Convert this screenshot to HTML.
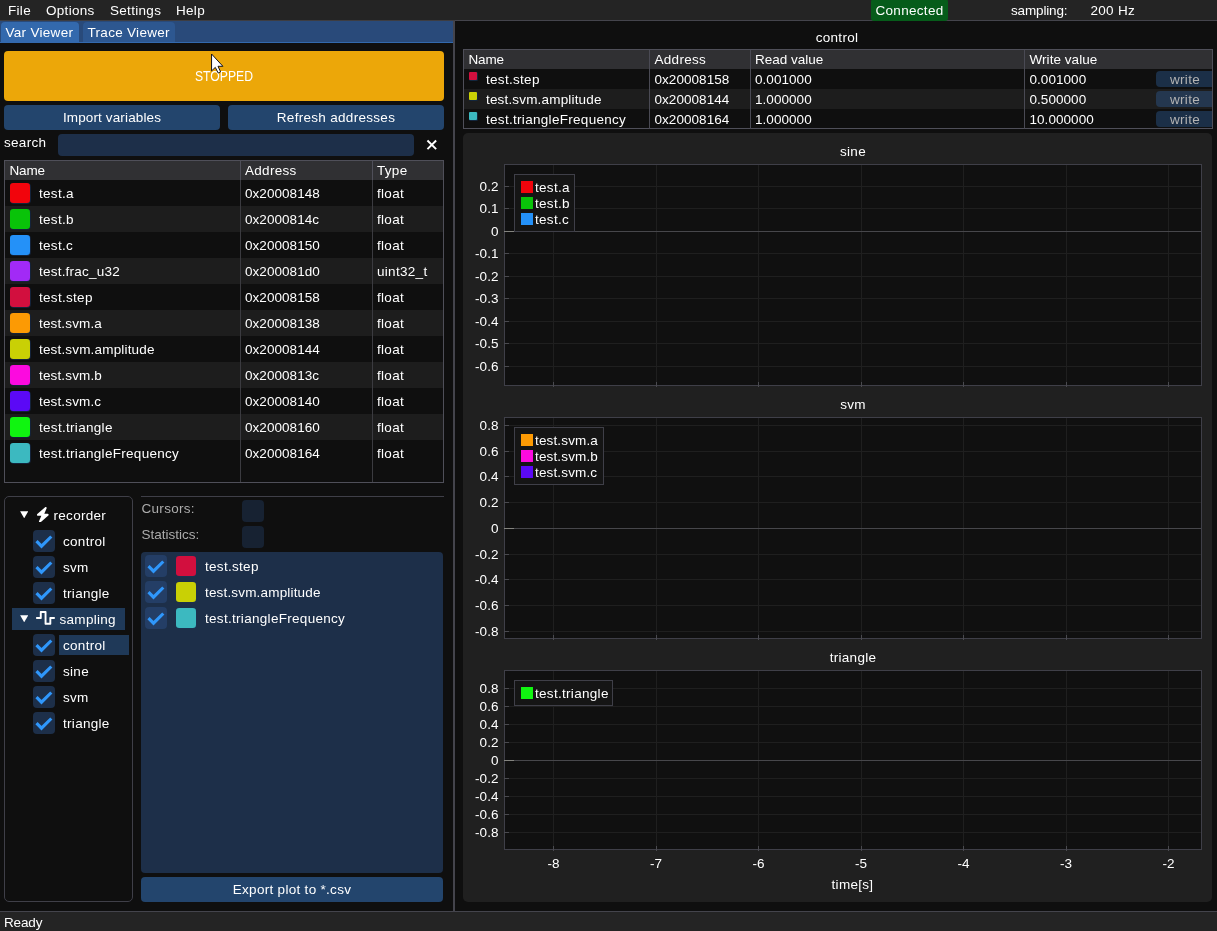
<!DOCTYPE html>
<html><head><meta charset="utf-8"><title>MCUViewer</title>
<style>
html,body{margin:0;padding:0;}
body{width:1217px;height:931px;overflow:hidden;position:relative;background:#0f0f0f;
 font-family:"Liberation Sans",sans-serif;font-size:13.5px;letter-spacing:0.3px;line-height:16px;color:#fff;}
#app{position:absolute;left:0;top:0;width:1217px;height:931px;overflow:hidden;will-change:transform;}
#app>div,#app>span,#app>svg{position:absolute;display:block;}
#app>span{white-space:pre;height:16px;}
#app>span.n{letter-spacing:0.05px;}
</style></head><body><div id="app">
<div style="left:0px;top:0px;width:1217px;height:20px;background:#242424;"></div>
<div style="left:0px;top:20px;width:455px;height:1px;background:#3d3d42;"></div>
<span style="left:8px;top:3px;">File</span>
<span style="left:46px;top:3px;">Options</span>
<span style="left:110px;top:3px;">Settings</span>
<span style="left:176px;top:3px;">Help</span>
<span style="left:1011px;top:3px;letter-spacing:-0.15px;">sampling:</span>
<span style="left:1090.5px;top:3px;">200 Hz</span>
<div style="left:0px;top:21px;width:453px;height:21px;background:#294a7a;"></div>
<div style="left:0px;top:42px;width:453px;height:1px;background:#3369ad;"></div>
<div style="left:1px;top:22px;width:78px;height:20px;background:#3369ad;border-radius:4px 4px 0 0;"></div>
<div style="left:83px;top:22px;width:92px;height:20px;background:#2d5790;border-radius:4px 4px 0 0;"></div>
<span style="left:5.5px;top:25px;">Var Viewer</span>
<span style="left:87.5px;top:25px;">Trace Viewer</span>
<div style="left:453px;top:21px;width:2px;height:890px;background:#44444c;"></div>
<div style="left:455px;top:20px;width:762px;height:1px;background:#44444c;"></div>
<div style="left:871px;top:-1px;width:77px;height:22px;background:#065c1a;border-radius:3px;"></div>
<span style="left:875.5px;top:3px;">Connected</span>
<div style="left:4px;top:51px;width:440px;height:50px;background:#eca709;border-radius:4px;"></div>
<span style="left:73.9px;width:300px;text-align:center;top:68px;font-size:14.6px;letter-spacing:0;transform:scaleX(0.835);">STOPPED</span>
<div style="left:4px;top:105px;width:216px;height:25px;background:#23456d;border-radius:4px;"></div>
<div style="left:228px;top:105px;width:216px;height:25px;background:#23456d;border-radius:4px;"></div>
<span style="left:-38px;width:300px;text-align:center;top:110px;letter-spacing:0.13px;">Import variables</span>
<span style="left:186px;width:300px;text-align:center;top:110px;">Refresh addresses</span>
<span style="left:4px;top:135px;">search</span>
<div style="left:58px;top:134px;width:356px;height:21.5px;background:#1d2f49;border-radius:4px;"></div>
<svg style="left:426.1px;top:138.8px" width="11.6" height="11.6" viewBox="0 0 12 12"><path d="M1.5 1.5 L10.5 10.5 M10.5 1.5 L1.5 10.5" stroke="#fff" stroke-width="2" fill="none"/></svg>
<div style="left:4px;top:160px;width:440px;height:323px;background:#4f4f59;"></div>
<div style="left:5px;top:161px;width:438px;height:321px;background:#0f0f0f;"></div>
<div style="left:5px;top:161px;width:438px;height:19px;background:#303033;"></div>
<div style="left:9.5px;top:182.5px;width:21px;height:21px;background:#14233a;border-radius:4px;"></div>
<div style="left:10px;top:183px;width:20px;height:20px;background:#f2040c;border-radius:3.2px;"></div>
<span style="left:39px;top:186px;">test.a</span>
<span class="n" style="left:245px;top:186px;">0x20008148</span>
<span style="left:377px;top:186px;">float</span>
<div style="left:5px;top:206px;width:438px;height:26px;background:#1d1d1d;"></div>
<div style="left:9.5px;top:208.5px;width:21px;height:21px;background:#14233a;border-radius:4px;"></div>
<div style="left:10px;top:209px;width:20px;height:20px;background:#09c309;border-radius:3.2px;"></div>
<span style="left:39px;top:212px;">test.b</span>
<span class="n" style="left:245px;top:212px;">0x2000814c</span>
<span style="left:377px;top:212px;">float</span>
<div style="left:9.5px;top:234.5px;width:21px;height:21px;background:#14233a;border-radius:4px;"></div>
<div style="left:10px;top:235px;width:20px;height:20px;background:#2491f8;border-radius:3.2px;"></div>
<span style="left:39px;top:238px;">test.c</span>
<span class="n" style="left:245px;top:238px;">0x20008150</span>
<span style="left:377px;top:238px;">float</span>
<div style="left:5px;top:258px;width:438px;height:26px;background:#1d1d1d;"></div>
<div style="left:9.5px;top:260.5px;width:21px;height:21px;background:#14233a;border-radius:4px;"></div>
<div style="left:10px;top:261px;width:20px;height:20px;background:#a22af6;border-radius:3.2px;"></div>
<span style="left:39px;top:264px;letter-spacing:0.22px;">test.frac_u32</span>
<span class="n" style="left:245px;top:264px;">0x200081d0</span>
<span style="left:377px;top:264px;">uint32_t</span>
<div style="left:9.5px;top:286.5px;width:21px;height:21px;background:#14233a;border-radius:4px;"></div>
<div style="left:10px;top:287px;width:20px;height:20px;background:#d20f3e;border-radius:3.2px;"></div>
<span style="left:39px;top:290px;">test.step</span>
<span class="n" style="left:245px;top:290px;">0x20008158</span>
<span style="left:377px;top:290px;">float</span>
<div style="left:5px;top:310px;width:438px;height:26px;background:#1d1d1d;"></div>
<div style="left:9.5px;top:312.5px;width:21px;height:21px;background:#14233a;border-radius:4px;"></div>
<div style="left:10px;top:313px;width:20px;height:20px;background:#fc9a04;border-radius:3.2px;"></div>
<span style="left:39px;top:316px;letter-spacing:0.15px;">test.svm.a</span>
<span class="n" style="left:245px;top:316px;">0x20008138</span>
<span style="left:377px;top:316px;">float</span>
<div style="left:9.5px;top:338.5px;width:21px;height:21px;background:#14233a;border-radius:4px;"></div>
<div style="left:10px;top:339px;width:20px;height:20px;background:#c9d005;border-radius:3.2px;"></div>
<span style="left:39px;top:342px;letter-spacing:0.17px;">test.svm.amplitude</span>
<span class="n" style="left:245px;top:342px;">0x20008144</span>
<span style="left:377px;top:342px;">float</span>
<div style="left:5px;top:362px;width:438px;height:26px;background:#1d1d1d;"></div>
<div style="left:9.5px;top:364.5px;width:21px;height:21px;background:#14233a;border-radius:4px;"></div>
<div style="left:10px;top:365px;width:20px;height:20px;background:#fc0adf;border-radius:3.2px;"></div>
<span style="left:39px;top:368px;letter-spacing:0.15px;">test.svm.b</span>
<span class="n" style="left:245px;top:368px;">0x2000813c</span>
<span style="left:377px;top:368px;">float</span>
<div style="left:9.5px;top:390.5px;width:21px;height:21px;background:#14233a;border-radius:4px;"></div>
<div style="left:10px;top:391px;width:20px;height:20px;background:#5b09f6;border-radius:3.2px;"></div>
<span style="left:39px;top:394px;letter-spacing:0.15px;">test.svm.c</span>
<span class="n" style="left:245px;top:394px;">0x20008140</span>
<span style="left:377px;top:394px;">float</span>
<div style="left:5px;top:414px;width:438px;height:26px;background:#1d1d1d;"></div>
<div style="left:9.5px;top:416.5px;width:21px;height:21px;background:#14233a;border-radius:4px;"></div>
<div style="left:10px;top:417px;width:20px;height:20px;background:#10f510;border-radius:3.2px;"></div>
<span style="left:39px;top:420px;">test.triangle</span>
<span class="n" style="left:245px;top:420px;">0x20008160</span>
<span style="left:377px;top:420px;">float</span>
<div style="left:9.5px;top:442.5px;width:21px;height:21px;background:#14233a;border-radius:4px;"></div>
<div style="left:10px;top:443px;width:20px;height:20px;background:#3cb9c0;border-radius:3.2px;"></div>
<span style="left:39px;top:446px;">test.triangleFrequency</span>
<span class="n" style="left:245px;top:446px;">0x20008164</span>
<span style="left:377px;top:446px;">float</span>
<span style="left:9.5px;top:163px;letter-spacing:-0.18px;">Name</span>
<span style="left:245px;top:163px;">Address</span>
<span style="left:377px;top:163px;">Type</span>
<div style="left:240px;top:161px;width:1px;height:321px;background:#3b3b40;"></div>
<div style="left:372px;top:161px;width:1px;height:321px;background:#3b3b40;"></div>
<div style="left:240px;top:161px;width:1px;height:19px;background:#4f4f59;"></div>
<div style="left:372px;top:161px;width:1px;height:19px;background:#4f4f59;"></div>
<div style="left:4px;top:496px;width:129px;height:406px;box-sizing:border-box;border:1px solid #3f3f48;border-radius:5px;"></div>
<svg style="left:19.8px;top:510.8px" width="8.4" height="7.4" viewBox="0 0 8.4 7.4"><path d="M0.1 0.2 L8.3 0.2 L4.2 7.3 Z" fill="#fff"/></svg>
<svg style="left:36.05px;top:506.6px" width="13.65" height="15.6" viewBox="0 0 448 512"><path d="M349.4 44.6c5.900-13.700 1.500-29.700-10.600-38.500s-28.600-8-39.900 1.800l-256 224c-10 8.800-13.600 22.900-8.900 35.300S50.700 288 64 288H175.500L98.600 467.400c-5.900 13.700-1.500 29.700 10.600 38.500s28.600 8 39.900-1.800l256-224c10-8.800 13.600-22.900 8.900-35.300s-16.600-20.700-30-20.700H272.500L349.400 44.600z" fill="#fff"/></svg>
<span style="left:53.5px;top:508px;">recorder</span>
<div style="left:33px;top:530px;width:22px;height:22px;background:#1d2f49;border-radius:4px;"></div>
<svg style="left:33px;top:530px" width="22" height="22" viewBox="0 0 22 22"><path d="M3.5 11.1 L8.5 16.2 L18.3 6.5" fill="none" stroke="#2f97fb" stroke-width="3.1"/></svg>
<span style="left:63px;top:534px;">control</span>
<div style="left:33px;top:556px;width:22px;height:22px;background:#1d2f49;border-radius:4px;"></div>
<svg style="left:33px;top:556px" width="22" height="22" viewBox="0 0 22 22"><path d="M3.5 11.1 L8.5 16.2 L18.3 6.5" fill="none" stroke="#2f97fb" stroke-width="3.1"/></svg>
<span style="left:63px;top:560px;">svm</span>
<div style="left:33px;top:582px;width:22px;height:22px;background:#1d2f49;border-radius:4px;"></div>
<svg style="left:33px;top:582px" width="22" height="22" viewBox="0 0 22 22"><path d="M3.5 11.1 L8.5 16.2 L18.3 6.5" fill="none" stroke="#2f97fb" stroke-width="3.1"/></svg>
<span style="left:63px;top:586px;">triangle</span>
<div style="left:12px;top:608px;width:113px;height:22px;background:#1f3958;"></div>
<svg style="left:19.8px;top:614.8px" width="8.4" height="7.4" viewBox="0 0 8.4 7.4"><path d="M0.1 0.2 L8.3 0.2 L4.2 7.3 Z" fill="#fff"/></svg>
<svg style="left:35.95px;top:610.3px" width="19.1" height="15.85" viewBox="0 0 640 512" preserveAspectRatio="none"><path d="M128 64c0-17.700 14.300-32 32-32H320c17.700 0 32 14.300 32 32V416h96V256c0-17.700 14.300-32 32-32H608c17.700 0 32 14.300 32 32s-14.300 32-32 32H512V448c0 17.700-14.300 32-32 32H320c-17.700 0-32-14.300-32-32V96H192V256c0 17.700-14.300 32-32 32H32c-17.700 0-32-14.300-32-32s14.300-32 32-32h96V64z" fill="#fff"/></svg>
<span style="left:59.5px;top:612px;">sampling</span>
<div style="left:59px;top:635px;width:70px;height:20px;background:#1f3958;"></div>
<div style="left:33px;top:634px;width:22px;height:22px;background:#1d2f49;border-radius:4px;"></div>
<svg style="left:33px;top:634px" width="22" height="22" viewBox="0 0 22 22"><path d="M3.5 11.1 L8.5 16.2 L18.3 6.5" fill="none" stroke="#2f97fb" stroke-width="3.1"/></svg>
<span style="left:63px;top:638px;">control</span>
<div style="left:33px;top:660px;width:22px;height:22px;background:#1d2f49;border-radius:4px;"></div>
<svg style="left:33px;top:660px" width="22" height="22" viewBox="0 0 22 22"><path d="M3.5 11.1 L8.5 16.2 L18.3 6.5" fill="none" stroke="#2f97fb" stroke-width="3.1"/></svg>
<span style="left:63px;top:664px;">sine</span>
<div style="left:33px;top:686px;width:22px;height:22px;background:#1d2f49;border-radius:4px;"></div>
<svg style="left:33px;top:686px" width="22" height="22" viewBox="0 0 22 22"><path d="M3.5 11.1 L8.5 16.2 L18.3 6.5" fill="none" stroke="#2f97fb" stroke-width="3.1"/></svg>
<span style="left:63px;top:690px;">svm</span>
<div style="left:33px;top:712px;width:22px;height:22px;background:#1d2f49;border-radius:4px;"></div>
<svg style="left:33px;top:712px" width="22" height="22" viewBox="0 0 22 22"><path d="M3.5 11.1 L8.5 16.2 L18.3 6.5" fill="none" stroke="#2f97fb" stroke-width="3.1"/></svg>
<span style="left:63px;top:716px;">triangle</span>
<div style="left:141px;top:496px;width:303px;height:1px;background:#3f3f48;"></div>
<span style="left:141.5px;top:501px;color:#acacac;">Cursors:</span>
<span style="left:141.5px;top:527px;color:#acacac;letter-spacing:0px;">Statistics:</span>
<div style="left:242px;top:500px;width:22px;height:22px;background:#172232;border-radius:4px;"></div>
<div style="left:242px;top:526px;width:22px;height:22px;background:#172232;border-radius:4px;"></div>
<div style="left:141px;top:552px;width:302px;height:321px;background:#1d2f49;border-radius:4px;"></div>
<div style="left:145px;top:555px;width:22px;height:22px;background:#243e66;border-radius:4px;"></div>
<svg style="left:145px;top:555px" width="22" height="22" viewBox="0 0 22 22"><path d="M3.5 11.1 L8.5 16.2 L18.3 6.5" fill="none" stroke="#2f97fb" stroke-width="3.1"/></svg>
<div style="left:175.5px;top:555.5px;width:21px;height:21px;background:#1c3150;border-radius:4px;"></div>
<div style="left:176px;top:556px;width:20px;height:20px;background:#d20f3e;border-radius:3.2px;"></div>
<span style="left:205px;top:559px;">test.step</span>
<div style="left:145px;top:581px;width:22px;height:22px;background:#243e66;border-radius:4px;"></div>
<svg style="left:145px;top:581px" width="22" height="22" viewBox="0 0 22 22"><path d="M3.5 11.1 L8.5 16.2 L18.3 6.5" fill="none" stroke="#2f97fb" stroke-width="3.1"/></svg>
<div style="left:175.5px;top:581.5px;width:21px;height:21px;background:#1c3150;border-radius:4px;"></div>
<div style="left:176px;top:582px;width:20px;height:20px;background:#c9d005;border-radius:3.2px;"></div>
<span style="left:205px;top:585px;letter-spacing:0.17px;">test.svm.amplitude</span>
<div style="left:145px;top:607px;width:22px;height:22px;background:#243e66;border-radius:4px;"></div>
<svg style="left:145px;top:607px" width="22" height="22" viewBox="0 0 22 22"><path d="M3.5 11.1 L8.5 16.2 L18.3 6.5" fill="none" stroke="#2f97fb" stroke-width="3.1"/></svg>
<div style="left:175.5px;top:607.5px;width:21px;height:21px;background:#1c3150;border-radius:4px;"></div>
<div style="left:176px;top:608px;width:20px;height:20px;background:#3cb9c0;border-radius:3.2px;"></div>
<span style="left:205px;top:611px;">test.triangleFrequency</span>
<div style="left:141px;top:877px;width:302px;height:25px;background:#23456d;border-radius:4px;"></div>
<span style="left:142px;width:300px;text-align:center;top:882px;">Export plot to *.csv</span>
<div style="left:0px;top:911px;width:1217px;height:1px;background:#44444c;"></div>
<div style="left:0px;top:912px;width:1217px;height:19px;background:#242424;"></div>
<span style="left:4px;top:915px;letter-spacing:-0.15px;">Ready</span>
<span style="left:687px;width:300px;text-align:center;top:30px;">control</span>
<div style="left:463px;top:49px;width:750px;height:80px;background:#4f4f59;"></div>
<div style="left:464px;top:50px;width:748px;height:78px;background:#0f0f0f;"></div>
<div style="left:464px;top:50px;width:748px;height:19px;background:#303033;"></div>
<div style="left:468.55px;top:71.55px;width:9.1px;height:9.1px;background:#12263d;border-radius:1.6px;"></div>
<div style="left:469px;top:72px;width:8.25px;height:8.25px;background:#d20f3e;border-radius:1px;"></div>
<span style="left:486px;top:72px;">test.step</span>
<span class="n" style="left:654.5px;top:72px;">0x20008158</span>
<span class="n" style="left:755px;top:72px;">0.001000</span>
<span class="n" style="left:1029.5px;top:72px;">0.001000</span>
<div style="left:1156px;top:71px;width:56px;height:16px;background:#1b2f47;border-radius:4px 0 0 4px;"></div>
<span style="left:1170px;top:72px;color:#b2b2b2;">write</span>
<div style="left:464px;top:89px;width:748px;height:20px;background:#1d1d1d;"></div>
<div style="left:468.55px;top:91.55px;width:9.1px;height:9.1px;background:#12263d;border-radius:1.6px;"></div>
<div style="left:469px;top:92px;width:8.25px;height:8.25px;background:#c9d005;border-radius:1px;"></div>
<span style="left:486px;top:92px;letter-spacing:0.17px;">test.svm.amplitude</span>
<span class="n" style="left:654.5px;top:92px;">0x20008144</span>
<span class="n" style="left:755px;top:92px;">1.000000</span>
<span class="n" style="left:1029.5px;top:92px;">0.500000</span>
<div style="left:1156px;top:91px;width:56px;height:16px;background:#24374f;border-radius:4px 0 0 4px;"></div>
<span style="left:1170px;top:92px;color:#b2b2b2;">write</span>
<div style="left:468.55px;top:111.55px;width:9.1px;height:9.1px;background:#12263d;border-radius:1.6px;"></div>
<div style="left:469px;top:112px;width:8.25px;height:8.25px;background:#3cb9c0;border-radius:1px;"></div>
<span style="left:486px;top:112px;">test.triangleFrequency</span>
<span class="n" style="left:654.5px;top:112px;">0x20008164</span>
<span class="n" style="left:755px;top:112px;">1.000000</span>
<span class="n" style="left:1029.5px;top:112px;">10.000000</span>
<div style="left:1156px;top:111px;width:56px;height:16px;background:#1b2f47;border-radius:4px 0 0 4px;"></div>
<span style="left:1170px;top:112px;color:#b2b2b2;">write</span>
<span style="left:468.5px;top:52px;letter-spacing:-0.18px;">Name</span>
<span style="left:654.5px;top:52px;">Address</span>
<span style="left:755px;top:52px;letter-spacing:0px;">Read value</span>
<span style="left:1029.5px;top:52px;letter-spacing:0.05px;">Write value</span>
<div style="left:649px;top:50px;width:1px;height:79px;background:#4a4a54;"></div>
<div style="left:750px;top:50px;width:1px;height:79px;background:#4a4a54;"></div>
<div style="left:1024px;top:50px;width:1px;height:79px;background:#4a4a54;"></div>
<div style="left:463px;top:133px;width:749px;height:769px;background:#202020;border-radius:5px;"></div>
<span style="left:703px;width:300px;text-align:center;top:144px;">sine</span>
<div style="left:504px;top:164px;width:698px;height:222px;background:#3f3f48;"></div>
<div style="left:505px;top:165px;width:696px;height:220px;background:#101010;"></div>
<div style="left:553px;top:165px;width:1px;height:220px;background:#1f1f1f;"></div>
<div style="left:553px;top:382px;width:1px;height:5px;background:#4a4a4f;"></div>
<div style="left:656px;top:165px;width:1px;height:220px;background:#1f1f1f;"></div>
<div style="left:656px;top:382px;width:1px;height:5px;background:#4a4a4f;"></div>
<div style="left:758px;top:165px;width:1px;height:220px;background:#1f1f1f;"></div>
<div style="left:758px;top:382px;width:1px;height:5px;background:#4a4a4f;"></div>
<div style="left:861px;top:165px;width:1px;height:220px;background:#1f1f1f;"></div>
<div style="left:861px;top:382px;width:1px;height:5px;background:#4a4a4f;"></div>
<div style="left:963px;top:165px;width:1px;height:220px;background:#1f1f1f;"></div>
<div style="left:963px;top:382px;width:1px;height:5px;background:#4a4a4f;"></div>
<div style="left:1066px;top:165px;width:1px;height:220px;background:#1f1f1f;"></div>
<div style="left:1066px;top:382px;width:1px;height:5px;background:#4a4a4f;"></div>
<div style="left:1168px;top:165px;width:1px;height:220px;background:#1f1f1f;"></div>
<div style="left:1168px;top:382px;width:1px;height:5px;background:#4a4a4f;"></div>
<div style="left:505px;top:186px;width:696px;height:1px;background:#1f1f1f;"></div>
<div style="left:504px;top:186px;width:5px;height:1px;background:#4a4a4f;"></div>
<span class="n" style="right:718.5px;top:179px;">0.2</span>
<div style="left:505px;top:208px;width:696px;height:1px;background:#1f1f1f;"></div>
<div style="left:504px;top:208px;width:5px;height:1px;background:#4a4a4f;"></div>
<span class="n" style="right:718.5px;top:201px;">0.1</span>
<div style="left:505px;top:231px;width:696px;height:1px;background:#47474b;"></div>
<div style="left:504px;top:231px;width:5px;height:1px;background:#4a4a4f;"></div>
<div style="left:504px;top:231px;width:10px;height:1px;background:#84847f;"></div>
<span class="n" style="right:718.5px;top:224px;">0</span>
<div style="left:505px;top:253px;width:696px;height:1px;background:#1f1f1f;"></div>
<div style="left:504px;top:253px;width:5px;height:1px;background:#4a4a4f;"></div>
<span class="n" style="right:718.5px;top:246px;">-0.1</span>
<div style="left:505px;top:276px;width:696px;height:1px;background:#1f1f1f;"></div>
<div style="left:504px;top:276px;width:5px;height:1px;background:#4a4a4f;"></div>
<span class="n" style="right:718.5px;top:269px;">-0.2</span>
<div style="left:505px;top:298px;width:696px;height:1px;background:#1f1f1f;"></div>
<div style="left:504px;top:298px;width:5px;height:1px;background:#4a4a4f;"></div>
<span class="n" style="right:718.5px;top:291px;">-0.3</span>
<div style="left:505px;top:321px;width:696px;height:1px;background:#1f1f1f;"></div>
<div style="left:504px;top:321px;width:5px;height:1px;background:#4a4a4f;"></div>
<span class="n" style="right:718.5px;top:314px;">-0.4</span>
<div style="left:505px;top:343px;width:696px;height:1px;background:#1f1f1f;"></div>
<div style="left:504px;top:343px;width:5px;height:1px;background:#4a4a4f;"></div>
<span class="n" style="right:718.5px;top:336px;">-0.5</span>
<div style="left:505px;top:366px;width:696px;height:1px;background:#1f1f1f;"></div>
<div style="left:504px;top:366px;width:5px;height:1px;background:#4a4a4f;"></div>
<span class="n" style="right:718.5px;top:359px;">-0.6</span>
<div style="left:514px;top:174px;width:61px;height:58px;background:#3f3f48;"></div>
<div style="left:515px;top:175px;width:59px;height:56px;background:#151515;"></div>
<div style="left:521px;top:181px;width:12px;height:12px;background:#f2040c;"></div>
<span style="left:535px;top:179.5px;">test.a</span>
<div style="left:521px;top:197px;width:12px;height:12px;background:#09c309;"></div>
<span style="left:535px;top:195.5px;">test.b</span>
<div style="left:521px;top:213px;width:12px;height:12px;background:#2491f8;"></div>
<span style="left:535px;top:211.5px;">test.c</span>
<span style="left:703px;width:300px;text-align:center;top:397px;">svm</span>
<div style="left:504px;top:417px;width:698px;height:222px;background:#3f3f48;"></div>
<div style="left:505px;top:418px;width:696px;height:220px;background:#101010;"></div>
<div style="left:553px;top:418px;width:1px;height:220px;background:#1f1f1f;"></div>
<div style="left:553px;top:635px;width:1px;height:5px;background:#4a4a4f;"></div>
<div style="left:656px;top:418px;width:1px;height:220px;background:#1f1f1f;"></div>
<div style="left:656px;top:635px;width:1px;height:5px;background:#4a4a4f;"></div>
<div style="left:758px;top:418px;width:1px;height:220px;background:#1f1f1f;"></div>
<div style="left:758px;top:635px;width:1px;height:5px;background:#4a4a4f;"></div>
<div style="left:861px;top:418px;width:1px;height:220px;background:#1f1f1f;"></div>
<div style="left:861px;top:635px;width:1px;height:5px;background:#4a4a4f;"></div>
<div style="left:963px;top:418px;width:1px;height:220px;background:#1f1f1f;"></div>
<div style="left:963px;top:635px;width:1px;height:5px;background:#4a4a4f;"></div>
<div style="left:1066px;top:418px;width:1px;height:220px;background:#1f1f1f;"></div>
<div style="left:1066px;top:635px;width:1px;height:5px;background:#4a4a4f;"></div>
<div style="left:1168px;top:418px;width:1px;height:220px;background:#1f1f1f;"></div>
<div style="left:1168px;top:635px;width:1px;height:5px;background:#4a4a4f;"></div>
<div style="left:505px;top:425px;width:696px;height:1px;background:#1f1f1f;"></div>
<div style="left:504px;top:425px;width:5px;height:1px;background:#4a4a4f;"></div>
<span class="n" style="right:718.5px;top:418px;">0.8</span>
<div style="left:505px;top:451px;width:696px;height:1px;background:#1f1f1f;"></div>
<div style="left:504px;top:451px;width:5px;height:1px;background:#4a4a4f;"></div>
<span class="n" style="right:718.5px;top:444px;">0.6</span>
<div style="left:505px;top:476px;width:696px;height:1px;background:#1f1f1f;"></div>
<div style="left:504px;top:476px;width:5px;height:1px;background:#4a4a4f;"></div>
<span class="n" style="right:718.5px;top:469px;">0.4</span>
<div style="left:505px;top:502px;width:696px;height:1px;background:#1f1f1f;"></div>
<div style="left:504px;top:502px;width:5px;height:1px;background:#4a4a4f;"></div>
<span class="n" style="right:718.5px;top:495px;">0.2</span>
<div style="left:505px;top:528px;width:696px;height:1px;background:#47474b;"></div>
<div style="left:504px;top:528px;width:5px;height:1px;background:#4a4a4f;"></div>
<div style="left:504px;top:528px;width:10px;height:1px;background:#84847f;"></div>
<span class="n" style="right:718.5px;top:521px;">0</span>
<div style="left:505px;top:554px;width:696px;height:1px;background:#1f1f1f;"></div>
<div style="left:504px;top:554px;width:5px;height:1px;background:#4a4a4f;"></div>
<span class="n" style="right:718.5px;top:547px;">-0.2</span>
<div style="left:505px;top:579px;width:696px;height:1px;background:#1f1f1f;"></div>
<div style="left:504px;top:579px;width:5px;height:1px;background:#4a4a4f;"></div>
<span class="n" style="right:718.5px;top:572px;">-0.4</span>
<div style="left:505px;top:605px;width:696px;height:1px;background:#1f1f1f;"></div>
<div style="left:504px;top:605px;width:5px;height:1px;background:#4a4a4f;"></div>
<span class="n" style="right:718.5px;top:598px;">-0.6</span>
<div style="left:505px;top:631px;width:696px;height:1px;background:#1f1f1f;"></div>
<div style="left:504px;top:631px;width:5px;height:1px;background:#4a4a4f;"></div>
<span class="n" style="right:718.5px;top:624px;">-0.8</span>
<div style="left:514px;top:427px;width:90px;height:58px;background:#3f3f48;"></div>
<div style="left:515px;top:428px;width:88px;height:56px;background:#151515;"></div>
<div style="left:521px;top:434px;width:12px;height:12px;background:#fc9a04;"></div>
<span style="left:535px;top:432.5px;letter-spacing:0.15px;">test.svm.a</span>
<div style="left:521px;top:450px;width:12px;height:12px;background:#fc0adf;"></div>
<span style="left:535px;top:448.5px;letter-spacing:0.15px;">test.svm.b</span>
<div style="left:521px;top:466px;width:12px;height:12px;background:#5b09f6;"></div>
<span style="left:535px;top:464.5px;letter-spacing:0.15px;">test.svm.c</span>
<span style="left:703px;width:300px;text-align:center;top:650px;">triangle</span>
<div style="left:504px;top:670px;width:698px;height:180px;background:#3f3f48;"></div>
<div style="left:505px;top:671px;width:696px;height:178px;background:#101010;"></div>
<div style="left:553px;top:671px;width:1px;height:178px;background:#1f1f1f;"></div>
<div style="left:553px;top:846px;width:1px;height:5px;background:#4a4a4f;"></div>
<div style="left:656px;top:671px;width:1px;height:178px;background:#1f1f1f;"></div>
<div style="left:656px;top:846px;width:1px;height:5px;background:#4a4a4f;"></div>
<div style="left:758px;top:671px;width:1px;height:178px;background:#1f1f1f;"></div>
<div style="left:758px;top:846px;width:1px;height:5px;background:#4a4a4f;"></div>
<div style="left:861px;top:671px;width:1px;height:178px;background:#1f1f1f;"></div>
<div style="left:861px;top:846px;width:1px;height:5px;background:#4a4a4f;"></div>
<div style="left:963px;top:671px;width:1px;height:178px;background:#1f1f1f;"></div>
<div style="left:963px;top:846px;width:1px;height:5px;background:#4a4a4f;"></div>
<div style="left:1066px;top:671px;width:1px;height:178px;background:#1f1f1f;"></div>
<div style="left:1066px;top:846px;width:1px;height:5px;background:#4a4a4f;"></div>
<div style="left:1168px;top:671px;width:1px;height:178px;background:#1f1f1f;"></div>
<div style="left:1168px;top:846px;width:1px;height:5px;background:#4a4a4f;"></div>
<div style="left:505px;top:688px;width:696px;height:1px;background:#1f1f1f;"></div>
<div style="left:504px;top:688px;width:5px;height:1px;background:#4a4a4f;"></div>
<span class="n" style="right:718.5px;top:681px;">0.8</span>
<div style="left:505px;top:706px;width:696px;height:1px;background:#1f1f1f;"></div>
<div style="left:504px;top:706px;width:5px;height:1px;background:#4a4a4f;"></div>
<span class="n" style="right:718.5px;top:699px;">0.6</span>
<div style="left:505px;top:724px;width:696px;height:1px;background:#1f1f1f;"></div>
<div style="left:504px;top:724px;width:5px;height:1px;background:#4a4a4f;"></div>
<span class="n" style="right:718.5px;top:717px;">0.4</span>
<div style="left:505px;top:742px;width:696px;height:1px;background:#1f1f1f;"></div>
<div style="left:504px;top:742px;width:5px;height:1px;background:#4a4a4f;"></div>
<span class="n" style="right:718.5px;top:735px;">0.2</span>
<div style="left:505px;top:760px;width:696px;height:1px;background:#47474b;"></div>
<div style="left:504px;top:760px;width:5px;height:1px;background:#4a4a4f;"></div>
<div style="left:504px;top:760px;width:10px;height:1px;background:#84847f;"></div>
<span class="n" style="right:718.5px;top:753px;">0</span>
<div style="left:505px;top:778px;width:696px;height:1px;background:#1f1f1f;"></div>
<div style="left:504px;top:778px;width:5px;height:1px;background:#4a4a4f;"></div>
<span class="n" style="right:718.5px;top:771px;">-0.2</span>
<div style="left:505px;top:796px;width:696px;height:1px;background:#1f1f1f;"></div>
<div style="left:504px;top:796px;width:5px;height:1px;background:#4a4a4f;"></div>
<span class="n" style="right:718.5px;top:789px;">-0.4</span>
<div style="left:505px;top:814px;width:696px;height:1px;background:#1f1f1f;"></div>
<div style="left:504px;top:814px;width:5px;height:1px;background:#4a4a4f;"></div>
<span class="n" style="right:718.5px;top:807px;">-0.6</span>
<div style="left:505px;top:832px;width:696px;height:1px;background:#1f1f1f;"></div>
<div style="left:504px;top:832px;width:5px;height:1px;background:#4a4a4f;"></div>
<span class="n" style="right:718.5px;top:825px;">-0.8</span>
<div style="left:514px;top:680px;width:99px;height:26px;background:#3f3f48;"></div>
<div style="left:515px;top:681px;width:97px;height:24px;background:#151515;"></div>
<div style="left:521px;top:687px;width:12px;height:12px;background:#10f510;"></div>
<span style="left:535px;top:685.5px;">test.triangle</span>
<span style="left:403.5px;width:300px;text-align:center;top:856px;letter-spacing:0.05px;">-8</span>
<span style="left:506px;width:300px;text-align:center;top:856px;letter-spacing:0.05px;">-7</span>
<span style="left:608.5px;width:300px;text-align:center;top:856px;letter-spacing:0.05px;">-6</span>
<span style="left:711px;width:300px;text-align:center;top:856px;letter-spacing:0.05px;">-5</span>
<span style="left:813.5px;width:300px;text-align:center;top:856px;letter-spacing:0.05px;">-4</span>
<span style="left:916px;width:300px;text-align:center;top:856px;letter-spacing:0.05px;">-3</span>
<span style="left:1018.5px;width:300px;text-align:center;top:856px;letter-spacing:0.05px;">-2</span>
<span style="left:702.5px;width:300px;text-align:center;top:877px;">time[s]</span>
<svg style="left:210px;top:53px" width="15" height="22" viewBox="0 0 15 22"><path d="M1.55 1.0 L1.55 17.9 L5.3 14.4 L8.2 20.0 L10.6 18.8 L8.0 13.3 L12.9 13.3 Z" fill="#fff" stroke="#0a0a14" stroke-width="0.95" stroke-linejoin="miter"/></svg>
</div></body></html>
